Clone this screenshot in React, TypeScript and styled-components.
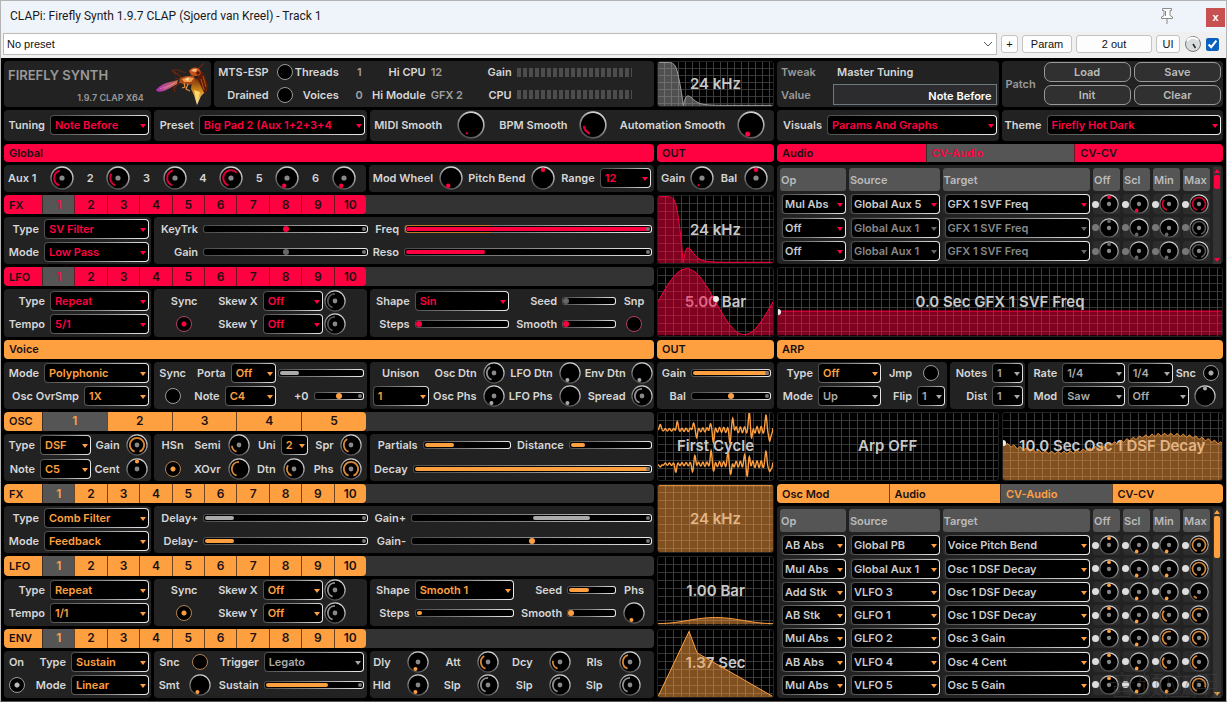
import React, { useId } from "react";
import styled, { createGlobalStyle, css, ThemeProvider, useTheme } from "styled-components";

declare module "styled-components" {
  export interface DefaultTheme {
    accent: string;
  }
}

const HOT = "#ff0040";
const WARM = "#ffa040";
const MUTE = "#aaaaaa";
const DIM = "#666666";
const hot = { accent: HOT };
const warm = { accent: WARM };

const Global = createGlobalStyle`
  * { box-sizing: border-box; }
  body { margin: 0; background: #000; }
  button, input, select { font: inherit; margin: 0; }
`;

/* ---------- host window ---------- */

const Window = styled.main`
  min-height: 100vh;
  display: flex;
  flex-direction: column;
  border: 1px solid #b4b4b4;
  border-bottom-color: #555;
  background: #f0f0f0;
  font-family: "Liberation Sans", Arial, sans-serif;
  font-size: 11px;
  color: #111;
`;

const TitleBar = styled.header`
  flex: none;
  height: 31px;
  display: flex;
  align-items: center;
  padding: 0 1px 2px 9px;
  background: #eff3fa;
`;

const Title = styled.h1`
  flex: 1;
  margin: 0;
  font: 400 12px Roboto, "Open Sans", sans-serif;
  color: #1a1a1a;
`;

const PinButton = styled.button`
  width: 20px;
  height: 20px;
  padding: 0;
  border: 0;
  background: none;
  margin-right: 29px;
`;

const CloseButton = styled.button`
  width: 19px;
  height: 19px;
  padding: 0 0 2px;
  border: 0;
  align-self: flex-end;
  margin-bottom: 3px;
  background: #c75050;
  color: #fff;
  font-weight: 700;
  line-height: 14px;
`;

const HostBar = styled.div`
  flex: none;
  height: 26px;
  display: flex;
  align-items: center;
  gap: 4px;
  padding: 0 7px 2px 2px;
`;

const PresetBox = styled.span`
  flex: 1;
  position: relative;
  display: flex;
  height: 22px;
  svg { position: absolute; right: 4px; top: 6px; pointer-events: none; }
`;

const PresetSelect = styled.select`
  flex: 1;
  appearance: none;
  border: 1px solid #bcbcbc;
  background: #fff;
  padding: 0 20px 0 3px;
  color: #111;
`;

const HostButton = styled.button<{ $w: number }>`
  width: ${(p) => p.$w}px;
  height: 18px;
  padding: 0;
  border: 1px solid #c4c4c4;
  border-radius: 3px;
  background: #fdfdfd;
  color: #111;
  line-height: 14px;
`;

const HostCheck = styled.input`
  width: 13px;
  height: 13px;
  accent-color: #0a62bd;
`;

/* ---------- plugin surface ---------- */

const Surface = styled.section`
  flex: 1;
  position: relative;
  background: #000;
  padding: 3px;
  display: grid;
  gap: 3px;
  grid-template-columns: minmax(0, 650fr) minmax(0, 117fr) minmax(0, 446fr);
  grid-template-rows: 46px 31px 18px 27px repeat(7, minmax(19px, 19fr) minmax(46px, 47fr));
  font-family: Inter, Roboto, sans-serif;
  font-size: 11px;
  font-weight: 600;
  line-height: 14px;
  color: #d6d6d6;
`;

const Slot = styled.div<{ $row: string; $col: string }>`
  grid-row: ${(p) => p.$row};
  grid-column: ${(p) => p.$col};
  display: flex;
  gap: 3px;
  min-width: 0;
  min-height: 0;
`;

const Panel = styled.div<{ $w?: number }>`
  flex: ${(p) => p.$w ?? 1} 1 0;
  min-width: 0;
  display: flex;
  flex-direction: column;
  padding: 0 2px 1px 0;
  border-radius: 4px;
  background: #222;
`;

const Line = styled.div<{ $cols: string }>`
  flex: 1;
  min-height: 0;
  display: grid;
  grid-template-columns: ${(p) => p.$cols};
  align-items: center;
`;

const Label = styled.label<{ $align?: "left" | "center"; $soft?: boolean }>`
  white-space: nowrap;
  min-width: 0;
  display: flex;
  color: ${(p) => (p.$soft ? "#999" : "#d6d6d6")};
  justify-content: ${(p) => (p.$align === "left" ? "flex-start" : p.$align === "center" ? "center" : "flex-end")};
  padding-right: ${(p) => (p.$align === "center" ? 0 : 5)}px;
  padding-left: ${(p) => (p.$align === "left" ? 4 : 0)}px;
`;

const Value = styled.span<{ $center?: boolean }>`
  color: #a0a0a0;
  white-space: nowrap;
  text-align: ${(p) => (p.$center ? "center" : "left")};
`;

const HeaderBar = styled.h2`
  flex: 1;
  margin: 0;
  min-width: 0;
  display: flex;
  align-items: center;
  padding-left: 5px;
  border-radius: 4px;
  background: ${(p) => p.theme.accent};
  color: #1a1012;
  font: inherit;
`;

const TabStrip = styled.div`
  flex: 1;
  min-width: 0;
  display: grid;
  grid-template-columns: 362fr 288fr;
  border-radius: 4px;
  overflow: hidden;
  background: #333;
`;

const TabGroup = styled.div<{ $cols: string }>`
  flex: 1;
  min-width: 0;
  display: grid;
  grid-template-columns: ${(p) => p.$cols};
  border-radius: 4px;
  overflow: hidden;
`;

const TabName = styled.span`
  display: flex;
  align-items: center;
  padding-left: 5px;
  background: ${(p) => p.theme.accent};
  color: #1a1012;
`;

const Tab = styled.button<{ $active?: boolean; $left?: boolean }>`
  min-width: 0;
  padding: 0 0 0 ${(p) => (p.$left ? 5 : 0)}px;
  border: 0;
  border-left: 1px solid rgba(50, 30, 20, 0.7);
  &:first-child { border-left: 0; }
  background: ${(p) => (p.$active ? "#555" : p.theme.accent)};
  color: ${(p) => (p.$active ? p.theme.accent : "#1a1012")};
  text-align: ${(p) => (p.$left ? "left" : "center")};
  font-size: ${(p) => (p.$left ? 11 : 12)}px;
`;

/* ---------- controls ---------- */

const rim = "linear-gradient(105deg, #4a4a4a, #888 50%, #f0f0f0) border-box";

const SelectShell = styled.span<{ $c: string }>`
  position: relative;
  display: flex;
  min-width: 0;
  height: 20px;
  border: 1px solid transparent;
  border-radius: 4px;
  background: linear-gradient(#000, #000) padding-box, ${rim};
  color: ${(p) => p.$c};
  &::after {
    content: "";
    position: absolute;
    right: 2px;
    top: 8px;
    border: 3px solid transparent;
    border-top: 4px solid currentColor;
    border-bottom: 0;
    pointer-events: none;
  }
`;

const NativeSelect = styled.select<{ $tight?: boolean }>`
  flex: 1;
  min-width: 0;
  appearance: none;
  border: 0;
  background: none;
  color: inherit;
  padding: 0 ${(p) => (p.$tight ? 8 : 10)}px 0 ${(p) => (p.$tight ? 2 : 4)}px;
  option { color: #ddd; background: #000; }
`;

type Tone = "accent" | "mute" | "dim";
const useTone = (tone?: Tone) => {
  const t = useTheme();
  return tone === "mute" ? MUTE : tone === "dim" ? DIM : t.accent;
};

function Select({ v, tone, color, arrow, tight, id, name }: any) {
  const c = useTone(tone);
  return (
    <SelectShell $c={arrow ?? c}>
      <NativeSelect id={id} aria-label={name} $tight={tight} style={color ? { color } : undefined}>
        <option>{v}</option>
      </NativeSelect>
    </SelectShell>
  );
}

const Overlay = styled.input`
  position: absolute;
  inset: 0;
  width: 100%;
  height: 100%;
  opacity: 0;
`;

const KnobShell = styled.span<{ $size: number }>`
  position: relative;
  flex: none;
  width: ${(p) => p.$size}px;
  height: ${(p) => p.$size}px;
  justify-self: center;
  display: block;
  svg { display: block; width: 100%; height: 100%; }
`;

function Knob({ v = 0, size = 22, hub = true, dot, tone, id, name }: any) {
  const c = useTone(tone);
  const gid = useId();
  const at = (t: number, r: number) => {
    const a = ((200 + t * 320) * Math.PI) / 180;
    return [12 + Math.sin(a) * r, 12 - Math.cos(a) * r];
  };
  const [x0, y0] = at(0, 7.8);
  const [x1, y1] = at(v, 7.8);
  const showDot = dot || v === 0;
  const [dx, dy] = at(v, 8.2);
  return (
    <KnobShell $size={size}>
      <svg viewBox="0 0 24 24" aria-hidden="true">
        <defs>
          <linearGradient id={gid} x1="0.2" y1="1" x2="0.7" y2="0">
            <stop offset="0" stopColor="#444" />
            <stop offset="1" stopColor="#d8d8d8" />
          </linearGradient>
        </defs>
        <circle cx="12" cy="12" r="11" fill="#000" stroke={`url(#${gid})`} strokeWidth="1.4" />
        {showDot ? (
          <circle cx={dx} cy={dy} r="2.2" fill={c} />
        ) : (
          <path
            d={`M${x0} ${y0}A7.8 7.8 0 ${v * 320 > 180 ? 1 : 0} 1 ${x1} ${y1}`}
            fill="none"
            stroke={c}
            strokeWidth="2"
            opacity="0.85"
          />
        )}
        {hub && <circle cx="12" cy="12" r="2.6" fill="#888" />}
      </svg>
      <Overlay type="range" id={id} aria-label={name} defaultValue={Math.round(v * 100)} />
    </KnobShell>
  );
}

const SliderShell = styled.span`
  position: relative;
  display: block;
  min-width: 0;
  height: 8px;
  border: 1px solid transparent;
  border-radius: 3px;
  background: linear-gradient(#000, #000) padding-box, ${rim};
`;

const Fill = styled.span`
  position: absolute;
  top: 1px;
  height: 4px;
  border-radius: 2px;
`;

const Thumb = styled.span`
  position: absolute;
  top: 0;
  width: 6px;
  height: 6px;
  border-radius: 3px;
`;

const EndDot = styled.span`
  position: absolute;
  right: 1px;
  top: 1px;
  width: 4px;
  height: 4px;
  border-radius: 2px;
  background: #777;
`;

const ModRange = styled.span`
  position: absolute;
  left: 0;
  top: -1px;
  bottom: -1px;
  border: 1px solid #c07828;
  border-right: 0;
  border-radius: 3px 0 0 3px;
`;

function Slider({ v = 0, from = 0, dot, end, tone, id, mod }: any) {
  const c = useTone(tone);
  return (
    <SliderShell>
      {mod && <ModRange style={{ width: `${mod * 100}%` }} />}
      {dot || v === 0 ? (
        <Thumb style={{ background: c, left: `calc(${v} * (100% - 6px))` }} />
      ) : (
        <Fill style={{ background: c, left: `calc(${from * 100}% + 1px)`, width: `calc(${(v - from) * 100}% - 2px)` }} />
      )}
      {end && <EndDot />}
      <Overlay type="range" id={id} defaultValue={Math.round(v * 100)} />
    </SliderShell>
  );
}

const Check = styled.input<{ $ring?: string; $dot?: string }>`
  appearance: none;
  justify-self: center;
  width: 16px;
  height: 16px;
  border: 1px solid ${(p) => p.$ring ?? "#999"};
  border-radius: 8px;
  background: #000;
  ${(p) =>
    p.$dot &&
    css`
      &:checked { background: radial-gradient(circle at 50% 50%, ${p.$dot} 2px, #000 3px); }
    `}
`;

function Field({ label, align, soft, children }: any) {
  const id = useId();
  return (
    <>
      <Label htmlFor={id} $align={align} $soft={soft}>{label}</Label>
      {React.cloneElement(children, { id })}
    </>
  );
}

/* ---------- graphs ---------- */

const GraphBox = styled.div<{ $w?: number; $cell?: number }>`
  flex: ${(p) => p.$w ?? 1} 1 0;
  min-width: 0;
  position: relative;
  overflow: hidden;
  display: flex;
  align-items: center;
  justify-content: center;
  border: 1px solid #222;
  border-radius: 3px;
  background:
    repeating-linear-gradient(90deg, transparent 0 ${(p) => (p.$cell ?? 8) - 1}px, #3e3e3e ${(p) => (p.$cell ?? 8) - 1}px ${(p) => p.$cell ?? 8}px),
    repeating-linear-gradient(180deg, transparent 0 ${(p) => (p.$cell ?? 8) - 1}px, #363636 ${(p) => (p.$cell ?? 8) - 1}px ${(p) => p.$cell ?? 8}px),
    #000;
  svg { position: absolute; inset: 0; width: 100%; height: 100%; }
`;

const GraphText = styled.span`
  font-size: 15px;
  line-height: 18px;
  color: #c8c8c8;
  white-space: nowrap;
`;

const Marker = styled.span`
  position: absolute;
  width: 6px;
  height: 6px;
  border-radius: 3px;
  background: #eee;
`;

function Graph({ text, line, w, color, cell, bare, mark }: any) {
  const c = color ?? useTheme().accent;
  return (
    <GraphBox $w={w} $cell={cell}>
      <GraphText>{text}</GraphText>
      {line && (
        <svg viewBox="0 0 100 100" preserveAspectRatio="none" aria-hidden="true">
          {!bare && <path d={`${line}L100 100L0 100Z`} fill={c} opacity="0.5" />}
          <path d={line} fill="none" stroke={c} strokeWidth={bare ? 1.4 : 1} vectorEffect="non-scaling-stroke" />
        </svg>
      )}
      {mark && <Marker style={{ left: `calc(${mark[0]}% - 3px)`, top: `calc(${mark[1]}% - 3px)` }} />}
    </GraphBox>
  );
}

const plot = (n: number, f: (t: number) => number) => {
  let d = "";
  for (let i = 0; i <= n; i++) d += `${i ? "L" : "M"}${((i / n) * 100).toFixed(2)} ${f(i / n).toFixed(2)}`;
  return d;
};
const filterLine =
  "M0 1L9 1C15 1 16 12 18 36C20 60 21 80 22 99C23 88 24 77 26 77C30 78 31 92 39 96C44 98 50 98.5 60 98.5L100 98.5";
const sineLine = plot(60, (t) => 50 - 49 * Math.sin(t * Math.PI * 2));
const smoothLine = plot(40, (t) => 99 - 4.5 * (1 - Math.cos(t * Math.PI * 2)));
const envLine = "M0 99L27 2L34 34L100 99";
const decayLine = plot(
  420,
  (t) => 45.5 + 13.5 * Math.sin(t * Math.PI * 2) + 1.8 * Math.sin(t * Math.PI * 2 * 35)
);
const wave = (base: number, spikes: number[][]) =>
  plot(340, (t) => {
    const x = t * 342;
    let y = base + (1.4 + t * 4) * Math.sin((x * Math.PI * 2) / 12.4);
    for (const [sx, h] of spikes) y += h * Math.exp(-(((x - sx) / 3.6) ** 2));
    return y;
  });
const cycleLine =
  wave(25, [[6, -8], [57, -11], [105, -10], [115, 9], [155, -8], [165, 16], [214, 16], [223, -16], [272, -24], [279, 12], [322, -20], [332, 22]]) +
  wave(76, [[8, 5], [53, 10], [103, 9], [110, -11], [158, -17], [166, 8], [208, -13], [217, 14], [258, -10], [266, 16], [272, -10], [322, -17], [332, 16]]);

/* ---------- brand and meters ---------- */

const Brand = styled.div`
  flex: 1;
  display: flex;
  justify-content: space-between;
  align-items: center;
  padding-left: 4px;
  color: #999;
`;

const BrandText = styled.div`
  flex: 1;
  display: flex;
  flex-direction: column;
  gap: 9px;
  padding-top: 3px;
`;

const BrandName = styled.strong`
  font-size: 13px;
  font-weight: 600;
  line-height: 16px;
`;

const Version = styled.span`
  font-size: 9px;
  line-height: 12px;
  text-align: right;
  padding-right: 11px;
`;

const Meter = styled.span`
  width: 115px;
  height: 9px;
  background: repeating-linear-gradient(90deg, #4c4c4c 0 4px, transparent 4px 6px);
`;

function Firefly() {
  return (
    <svg width="54" height="44" viewBox="0 0 54 44" aria-hidden="true">
      <defs>
        <linearGradient id="wingL" x1="0" x2="1"><stop stopColor="#b42cc0" /><stop offset="0.5" stopColor="#b85080" /><stop offset="1" stopColor="#c86838" /></linearGradient>
        <linearGradient id="wingR" x1="0" x2="0" y1="0" y2="1"><stop stopColor="#5a1c08" /><stop offset="0.5" stopColor="#d08818" /><stop offset="1" stopColor="#fff0b0" /></linearGradient>
      </defs>
      <path d="M43 7L49 1M26 15L17 8L21 13M31 11L23 8L18 8M27 18L20 16M24 21L19 26L20 30" fill="none" stroke="#6a2410" strokeWidth="1.2" />
      <path d="M1 28Q4 24 11 21L23 18L22 22Q16 26 9 29Q2 31 1 28Z" fill="url(#wingL)" />
      <path d="M5 27L20 21M9 27L22 20" stroke="#e89ab0" strokeWidth="0.500" />
      <path d="M37 18L48 14Q53 22 52 28L46 34L42 43L39 33L36 27Z" fill="url(#wingR)" />
      <path d="M46 8Q51 14 53 24L50 33L46 24L42 16Z" fill="#5c1a08" />
      <path d="M48 14L51 25M46 17L49 28" stroke="#c86418" strokeWidth="0.800" />
      <path d="M25 16Q31 13 39 14L41 20L34 23L24 21Z" fill="#a84818" />
      <path d="M27 17L33 15L39 16L36 20L29 20Z" fill="#f0a050" />
      <path d="M30 17L34 16L33 19Z" fill="#ffe8b0" />
      <path d="M34 9Q37 4 43 6Q47 9 45 13Q40 15 36 13Z" fill="#c85018" />
      <path d="M36 9Q38 6 42 7L41 10Z" fill="#f8c080" />
      <circle cx="43" cy="11" r="1.800" fill="#5a1808" />
      <path d="M33 22L31 27L35 29M29 21L30 25L27 26" fill="none" stroke="#e89040" strokeWidth="1.200" />
      <path d="M39 28L42 41L45 30Z" fill="#ffd868" />
    </svg>
  );
}

const TextInput = styled.input`
  height: 21px;
  min-width: 0;
  width: 100%;
  padding: 2px 4px 0;
  border: 1px solid #6c7a80;
  background: #2c2c2e;
  color: #fff;
  text-align: right;
`;

const PatchGrid = styled.div`
  flex: 1;
  display: grid;
  grid-template-columns: 39px 1fr 1fr;
  grid-template-rows: 1fr 1fr;
  gap: 2px 3px;
  align-items: center;
`;

const PatchName = styled.span`
  grid-row: 1 / 3;
  padding-left: 4px;
  color: #999;
`;

const PatchButton = styled.button`
  height: 20px;
  padding: 0;
  border: 1px solid #999;
  border-radius: 7px;
  background: #303030;
  color: #bbb;
`;

/* ---------- modulation matrix ---------- */

const Matrix = styled.div`
  flex: 1;
  min-width: 0;
  min-height: 0;
  contain: size;
  display: flex;
  overflow: hidden;
  border-radius: 4px;
  background: #222;
  padding-right: 2px;
`;

const Table = styled.table<{ $fill?: boolean }>`
  flex: 1;
  min-width: 0;
  table-layout: fixed;
  border-collapse: separate;
  border-spacing: 3px;
  ${(p) => p.$fill && "height: 100%;"}
  th {
    height: 23px;
    padding: 0 0 0 1px;
    border-radius: 3px;
    background: #555;
    color: #bbb;
    font-weight: 600;
    text-align: left;
  }
  td { height: 20px; padding: 0; border-radius: 3px; background: #2c2c2c; }
`;

const SelectCell = styled.div`
  padding-left: 2px;
  display: grid;
`;

const KnobCell = styled.div`
  display: flex;
  align-items: center;
  margin-left: -1px;
`;

const Led = styled.input`
  appearance: none;
  flex: none;
  width: 7px;
  height: 7px;
  border-radius: 4px;
  background: #777;
  &:checked { background: #ddd; }
`;

const Scroll = styled.div`
  width: 8px;
  margin-top: 2px;
  display: flex;
  flex-direction: column;
  align-items: center;
  justify-content: space-between;
  background: #333;
`;

const Arrow = styled.span<{ $down?: boolean }>`
  border: 3px solid transparent;
  border-${(p) => (p.$down ? "top" : "bottom")}: 4px solid ${(p) => p.theme.accent};
  border-${(p) => (p.$down ? "bottom" : "top")}: 0;
  margin: 2px 0;
`;

const ScrollThumb = styled.span<{ $h: number }>`
  width: 6px;
  height: ${(p) => p.$h}px;
  margin-bottom: auto;
  border-radius: 2px;
  background: ${(p) => p.theme.accent};
`;

const OpCol = styled.col`
  width: 16%;
`;
const SourceCol = styled.col`
  width: 22%;
`;
const KnobCol = styled.col`
  width: 27px;
`;

type MatrixRow = [string, string, string, number, number, number, boolean?];

function ModMatrix({ rows, thumb, fill }: { rows: MatrixRow[]; thumb: number; fill?: boolean }) {
  const { accent } = useTheme();
  return (
    <Matrix>
      <Table $fill={fill}>
        <colgroup>
          <OpCol /><SourceCol /><col /><KnobCol /><KnobCol /><KnobCol /><KnobCol />
        </colgroup>
        <thead>
          <tr>{["Op", "Source", "Target", "Off", "Scl", "Min", "Max"].map((h) => <th key={h}>{h}</th>)}</tr>
        </thead>
        <tbody>
          {rows.map(([op, src, dst, scl, min, max, off], i) => {
            const c = off ? "#888" : "#ccc";
            const k = off ? "dim" : "accent";
            const ar = off ? DIM : accent;
            return (
              <tr key={i}>
                <td><SelectCell><Select v={op} color="#ccc" arrow={accent} tight name="Op" /></SelectCell></td>
                <td><SelectCell><Select v={src} color={c} arrow={ar} tight name="Source" /></SelectCell></td>
                <td><SelectCell><Select v={dst} color={c} arrow={ar} tight name="Target" /></SelectCell></td>
                {[0.5, scl, min, max].map((val, j) => (
                  <td key={j}>
                    <KnobCell>
                      <Led type="checkbox" defaultChecked={!off} aria-label="Enable" />
                      <Knob v={val} size={20} dot={j === 0} tone={k} name={["Offset", "Scale", "Min", "Max"][j]} />
                    </KnobCell>
                  </td>
                ))}
              </tr>
            );
          })}
        </tbody>
      </Table>
      <Scroll>
        <Arrow />
        <ScrollThumb $h={thumb} />
        <Arrow $down />
      </Scroll>
    </Matrix>
  );
}

const Watermark = styled.span`
  position: absolute;
  right: 6px;
  bottom: 0;
  font: 100 28px "Noto Sans CJK SC", sans-serif;
  line-height: 34px;
  color: rgba(70, 70, 70, 0.6);
  pointer-events: none;
`;

function Tabs({ name, count }: { name: string; count: number }) {
  return (
    <TabStrip>
      <TabGroup $cols={`38fr repeat(${count}, ${324 / count}fr)`}>
        <TabName>{name}</TabName>
        {Array.from({ length: count }, (_, i) => (
          <Tab key={i} $active={i === 0}>{i + 1}</Tab>
        ))}
      </TabGroup>
    </TabStrip>
  );
}

function MatrixTabs({ names }: { names: string[] }) {
  return (
    <TabGroup $cols={`repeat(${names.length}, 1fr)`}>
      {names.map((n) => <Tab key={n} $left $active={n === "CV-Audio"}>{n}</Tab>)}
    </TabGroup>
  );
}

const LEFT = "1";
const MID = "2";
const RIGHT = "3";

function LfoPanels({ tempo, shape, snap, snapControl, cols, seed, seedTone, steps, knobTone, ring, dot }: any) {
  return (
    <>
      <Panel $w={146}>
        <Line $cols="46px 1fr"><Field label="Type"><Select v="Repeat" /></Field></Line>
        <Line $cols="46px 1fr"><Field label="Tempo"><Select v={tempo} /></Field></Line>
      </Panel>
      <Panel $w={213}>
        <Line $cols="61px 48px 1fr 24px 18px">
          <Label as="span" $align="center">Sync</Label>
          <Field label="Skew X"><Select v="Off" /></Field>
          <Knob v={0.5} tone={knobTone} name="Skew X amount" />
        </Line>
        <Line $cols="61px 48px 1fr 24px 18px">
          <Check type="checkbox" defaultChecked aria-label="Sync" $ring={ring} $dot={dot} />
          <Field label="Skew Y"><Select v="Off" /></Field>
          <Knob v={0.5} tone={knobTone} name="Skew Y amount" />
        </Line>
      </Panel>
      <Panel $w={285}>
        <Line $cols={cols}>
          <Field label="Shape"><Select v={shape} /></Field>
          <Field label="Seed"><Slider v={seed} tone={seedTone} /></Field>
          <Label as="span" $align="center">{snap}</Label>
        </Line>
        <Line $cols={cols}>
          <Field label="Steps"><Slider v={steps} /></Field>
          <Field label="Smooth"><Slider v={0} /></Field>
          {snapControl}
        </Line>
      </Panel>
    </>
  );
}

export default function App() {
  return (
    <ThemeProvider theme={hot}>
      <Global />
      <Window>
        <TitleBar>
          <Title>CLAPi: Firefly Synth 1.9.7 CLAP (Sjoerd van Kreel) - Track 1</Title>
          <PinButton aria-label="Pin">
            <svg width="20" height="20" viewBox="0 0 20 20" fill="#fff" stroke="#8a8a8a">
              <path d="M5.500 2.500h9v2h-1.500v5l2.500 1.500v1.500h-11v-1.500l2.500-1.500v-5h-1.500z" />
              <path d="M10 12.500v5.500M8.500 5v5" />
            </svg>
          </PinButton>
          <CloseButton aria-label="Close">x</CloseButton>
        </TitleBar>
        <HostBar>
          <PresetBox>
            <PresetSelect aria-label="Host preset"><option>No preset</option></PresetSelect>
            <svg width="10" height="10" viewBox="0 0 10 10" fill="none" stroke="#555"><path d="M1 3l4 4 4-4" /></svg>
          </PresetBox>
          <HostButton $w={17}>+</HostButton>
          <HostButton $w={50}>Param</HostButton>
          <HostButton $w={76}>2 out</HostButton>
          <HostButton $w={24}>UI</HostButton>
          <svg width="18" height="18" viewBox="0 0 18 18" aria-hidden="true">
            <circle cx="9" cy="9" r="7.500" fill="#d8dcdc" stroke="#777" />
            <path d="M3 6a7 7 0 0 1 11-1" stroke="#fff" strokeWidth="2" fill="none" />
            <path d="M9 9l2.500 4" stroke="#222" strokeWidth="1.500" />
          </svg>
          <HostCheck type="checkbox" defaultChecked aria-label="Enabled" />
        </HostBar>

        <Surface>
          <Slot $row="1" $col={LEFT}>
            <Panel $w={206}>
              <Brand>
                <BrandText>
                  <BrandName>FIREFLY SYNTH</BrandName>
                  <Version>1.9.7 CLAP X64</Version>
                </BrandText>
                <Firefly />
              </Brand>
            </Panel>
            <Panel $w={441}>
              <Line $cols="60px 23px 47px 31px 56px 46px 40px 1fr">
                <Field label="MTS-ESP"><Check type="checkbox" /></Field>
                <Label as="span">Threads</Label><Value $center>1</Value>
                <Label as="span">Hi CPU</Label><Value>12</Value>
                <Label as="span">Gain</Label><Meter />
              </Line>
              <Line $cols="60px 23px 47px 31px 56px 46px 40px 1fr">
                <Field label="Drained"><Check type="checkbox" /></Field>
                <Label as="span">Voices</Label><Value $center>0</Value>
                <Label as="span">Hi Module</Label><Value>GFX 2</Value>
                <Label as="span">CPU</Label><Meter />
              </Line>
            </Panel>
          </Slot>
          <Slot $row="1" $col={MID}><Graph text="24 kHz" line={filterLine} color="#a0a0a0" cell={7} /></Slot>
          <Slot $row="1" $col={RIGHT}>
            <Panel>
              <Line $cols="56px 1fr">
                <Label as="span" $soft $align="left">Tweak</Label>
                <Label as="span" $align="left">Master Tuning</Label>
              </Line>
              <Line $cols="56px 1fr">
                <Field label="Value" soft align="left"><TextInput defaultValue="Note Before" /></Field>
              </Line>
            </Panel>
            <Panel>
              <PatchGrid>
                <PatchName>Patch</PatchName>
                <PatchButton>Load</PatchButton><PatchButton>Save</PatchButton>
                <PatchButton>Init</PatchButton><PatchButton>Clear</PatchButton>
              </PatchGrid>
            </Panel>
          </Slot>

          <Slot $row="2" $col="1 / 3">
            <Panel $w={146}>
              <Line $cols="46px 1fr"><Field label="Tuning"><Select v="Note Before" /></Field></Line>
            </Panel>
            <Panel $w={213}>
              <Line $cols="45px 1fr"><Field label="Preset"><Select v="Big Pad 2 (Aux 1+2+3+4" /></Field></Line>
            </Panel>
            <Panel $w={405}>
              <Line $cols="81fr 42fr 81fr 42fr 117fr 42fr">
                <Field label="MIDI Smooth" align="left"><Knob size={28} v={0.04} hub={false} /></Field>
                <Field label="BPM Smooth"><Knob size={28} v={0.2} hub={false} /></Field>
                <Field label="Automation Smooth"><Knob size={28} hub={false} /></Field>
              </Line>
            </Panel>
          </Slot>
          <Slot $row="2" $col={RIGHT}>
            <Panel><Line $cols="50px 1fr"><Field label="Visuals"><Select v="Params And Graphs" /></Field></Line></Panel>
            <Panel><Line $cols="45px 1fr"><Field label="Theme"><Select v="Firefly Hot Dark" /></Field></Line></Panel>
          </Slot>

          <Slot $row="3" $col={LEFT}><HeaderBar>Global</HeaderBar></Slot>
          <Slot $row="3" $col={MID}><HeaderBar>OUT</HeaderBar></Slot>
          <Slot $row="3" $col={RIGHT}><MatrixTabs names={["Audio", "CV-Audio", "CV-CV"]} /></Slot>

          <Slot $row="4" $col={LEFT}>
            <Panel $w={362}>
              <Line $cols="44px repeat(11, 1fr) 6px">
                <Field label="Aux 1" align="left"><Knob size={24} v={0.45} /></Field>
                <Field label="2" align="center"><Knob size={24} v={0.32} /></Field>
                <Field label="3" align="center"><Knob size={24} v={0.45} /></Field>
                <Field label="4" align="center"><Knob size={24} v={0.65} /></Field>
                <Field label="5" align="center"><Knob size={24} /></Field>
                <Field label="6" align="center"><Knob size={24} /></Field>
              </Line>
            </Panel>
            <Panel $w={285}>
              <Line $cols="66px 32px 60px 32px 41px 1fr 1px">
                <Field label="Mod Wheel" align="left"><Knob size={24} hub={false} /></Field>
                <Field label="Pitch Bend" align="center"><Knob size={24} v={0.5} dot hub={false} /></Field>
                <Field label="Range"><Select v="12" /></Field>
              </Line>
            </Panel>
          </Slot>
          <Slot $row="4" $col={MID}>
            <Panel>
              <Line $cols="29px 1fr 21px 1fr">
                <Field label="Gain" align="left"><Knob size={24} v={0.04} /></Field>
                <Field label="Bal" align="center"><Knob size={24} v={0.5} dot /></Field>
              </Line>
            </Panel>
          </Slot>
          <Slot $row="4 / 7" $col={RIGHT}>
            <ModMatrix
              thumb={14}
              rows={[
                ["Mul Abs", "Global Aux 5", "GFX 1 SVF Freq", 0, 0.35, 1],
                ["Off", "Global Aux 1", "GFX 1 SVF Freq", 0, 0, 1, true],
                ["Off", "Global Aux 1", "GFX 1 SVF Freq", 0, 0, 1, true],
              ]}
            />
          </Slot>

          <Slot $row="5" $col={LEFT}><Tabs name="FX" count={10} /></Slot>
          <Slot $row="6" $col={LEFT}>
            <Panel $w={146}>
              <Line $cols="40px 1fr"><Field label="Type"><Select v="SV Filter" /></Field></Line>
              <Line $cols="40px 1fr"><Field label="Mode"><Select v="Low Pass" /></Field></Line>
            </Panel>
            <Panel $w={501}>
              <Line $cols="49px 165fr 36px 248fr">
                <Field label="KeyTrk"><Slider v={0.5} dot end /></Field>
                <Field label="Freq"><Slider v={1} end mod={0.35} /></Field>
              </Line>
              <Line $cols="49px 165fr 36px 248fr">
                <Field label="Gain"><Slider v={0.5} dot end tone="dim" /></Field>
                <Field label="Reso"><Slider v={0.33} end /></Field>
              </Line>
            </Panel>
          </Slot>
          <Slot $row="5 / 7" $col={MID}><Graph text="24 kHz" line={filterLine} /></Slot>

          <Slot $row="7" $col={LEFT}><Tabs name="LFO" count={10} /></Slot>
          <Slot $row="8" $col={LEFT}>
            <LfoPanels
              tempo="5/1" shape="Sin" snap="Snp" seed={0} seedTone="dim" steps={0} knobTone="dim"
              ring="#b04060" dot={HOT}
              cols="45px 95fr 53px 54fr 36px"
              snapControl={<Check type="checkbox" aria-label="Snap" $ring="#b04060" />}
            />
          </Slot>
          <Slot $row="7 / 9" $col={MID}><Graph text="5.00 Bar" line={sineLine} mark={[50, 46]} /></Slot>
          <Slot $row="7 / 9" $col={RIGHT}>
            <Graph text="0.0 Sec GFX 1 SVF Freq" line="M0 64L100 64" mark={[0, 65]} />
          </Slot>

          <ThemeProvider theme={warm}>
            <Slot $row="9" $col={LEFT}><HeaderBar>Voice</HeaderBar></Slot>
            <Slot $row="9" $col={MID}><HeaderBar>OUT</HeaderBar></Slot>
            <Slot $row="9" $col={RIGHT}><HeaderBar>ARP</HeaderBar></Slot>

            <Slot $row="10" $col={LEFT}>
              <Panel $w={146}>
                <Line $cols="40px 1fr"><Field label="Mode"><Select v="Polyphonic" /></Field></Line>
                <Line $cols="80px 1fr"><Field label="Osc OvrSmp"><Select v="1X" /></Field></Line>
              </Panel>
              <Panel $w={213}>
                <Line $cols="38px 39px 45px 2px 1fr 1px">
                  <Label as="span" $align="center">Sync</Label>
                  <Field label="Porta"><Select v="Off" /></Field>
                  <span />
                  <Slider v={0.25} tone="mute" />
                </Line>
                <Line $cols="38px 33px 51px 38px 1fr 1px">
                  <Check type="checkbox" aria-label="Sync" />
                  <Field label="Note"><Select v="C4" /></Field>
                  <Field label="+0"><Slider v={0.52} dot end /></Field>
                </Line>
              </Panel>
              <Panel $w={285}>
                <Line $cols="3px 56px 53px 24px 52px 24px 49px 1fr">
                  <span />
                  <Label as="span" $align="center">Unison</Label>
                  <Field label="Osc Dtn"><Knob v={0.4} tone="mute" /></Field>
                  <Field label="LFO Dtn"><Knob hub={false} tone="mute" /></Field>
                  <Field label="Env Dtn"><Knob hub={false} tone="mute" /></Field>
                </Line>
                <Line $cols="3px 56px 53px 24px 52px 24px 49px 1fr">
                  <span />
                  <Select v="1" name="Unison" />
                  <Field label="Osc Phs"><Knob tone="mute" /></Field>
                  <Field label="LFO Phs"><Knob hub={false} tone="mute" /></Field>
                  <Field label="Spread"><Knob v={0.5} tone="mute" /></Field>
                </Line>
              </Panel>
            </Slot>
            <Slot $row="10" $col={MID}>
              <Panel>
                <Line $cols="34px 1fr 1px"><Field label="Gain"><Slider v={1} end /></Field></Line>
                <Line $cols="34px 1fr 1px"><Field label="Bal"><Slider v={0.5} dot end /></Field></Line>
              </Panel>
            </Slot>
            <Slot $row="10" $col={RIGHT}>
              <Panel $w={170}>
                <Line $cols="41px 1fr 36px 28px">
                  <Field label="Type"><Select v="Off" /></Field>
                  <Field label="Jmp"><Check type="checkbox" /></Field>
                </Line>
                <Line $cols="41px 1fr 36px 28px">
                  <Field label="Mode"><Select v="Up" tone="mute" /></Field>
                  <Field label="Flip"><Select v="1" tone="mute" /></Field>
                </Line>
              </Panel>
              <Panel $w={74}>
                <Line $cols="42px 1fr"><Field label="Notes"><Select v="1" tone="mute" /></Field></Line>
                <Line $cols="42px 1fr"><Field label="Dist"><Select v="1" tone="mute" /></Field></Line>
              </Panel>
              <Panel $w={195}>
                <Line $cols="34px 62fr 3px 45fr 28px 20px">
                  <Field label="Rate"><Select v="1/4" tone="mute" /></Field>
                  <span />
                  <Select v="1/4" tone="mute" name="Rate unit" />
                  <Field label="Snc"><Check type="checkbox" defaultChecked $dot="#aaa" /></Field>
                </Line>
                <Line $cols="34px 62fr 3px 61fr 32px">
                  <Field label="Mod"><Select v="Saw" tone="mute" /></Field>
                  <span />
                  <Select v="Off" tone="mute" name="Mod target" />
                  <Knob v={0.5} dot hub={false} tone="mute" name="Mod amount" />
                </Line>
              </Panel>
            </Slot>

            <Slot $row="11" $col={LEFT}><Tabs name="OSC" count={5} /></Slot>
            <Slot $row="12" $col={LEFT}>
              <Panel $w={146}>
                <Line $cols="36px 1fr 34px 24px">
                  <Field label="Type"><Select v="DSF" /></Field>
                  <Field label="Gain"><Knob v={1} /></Field>
                </Line>
                <Line $cols="36px 1fr 34px 24px">
                  <Field label="Note"><Select v="C5" /></Field>
                  <Field label="Cent"><Knob v={0.5} dot /></Field>
                </Line>
              </Panel>
              <Panel $w={213}>
                <Line $cols="38px 34px 26px 29px 27px 31px 24px">
                  <Label as="span" $align="center">HSn</Label>
                  <Field label="Semi"><Knob v={0.2} /></Field>
                  <Field label="Uni"><Select v="2" /></Field>
                  <Field label="Spr"><Knob v={0.4} /></Field>
                </Line>
                <Line $cols="38px 34px 26px 29px 27px 31px 24px">
                  <Check type="checkbox" defaultChecked aria-label="HSn" $ring="#b08050" $dot={WARM} />
                  <Field label="XOvr"><Knob v={0.5} hub={false} /></Field>
                  <Field label="Dtn"><Knob v={0.32} /></Field>
                  <Field label="Phs"><Knob v={1} /></Field>
                </Line>
              </Panel>
              <Panel $w={285}>
                <Line $cols="53px 88fr 58px 83fr">
                  <Field label="Partials"><Slider v={0.36} /></Field>
                  <Field label="Distance"><Slider v={0.2} /></Field>
                </Line>
                <Line $cols="43px 1fr"><Field label="Decay"><Slider v={1} end /></Field></Line>
              </Panel>
            </Slot>
            <Slot $row="11 / 13" $col={MID}><Graph text="First Cycle" line={cycleLine} bare /></Slot>
            <Slot $row="11 / 13" $col={RIGHT}>
              <Graph text="Arp OFF" />
              <Graph text="10.0 Sec Osc 1 DSF Decay" line={decayLine} mark={[0, 45]} />
            </Slot>

            <Slot $row="13" $col={LEFT}><Tabs name="FX" count={10} /></Slot>
            <Slot $row="14" $col={LEFT}>
              <Panel $w={146}>
                <Line $cols="40px 1fr"><Field label="Type"><Select v="Comb Filter" /></Field></Line>
                <Line $cols="40px 1fr"><Field label="Mode"><Select v="Feedback" /></Field></Line>
              </Panel>
              <Panel $w={501}>
                <Line $cols="49px 165fr 43px 241fr">
                  <Field label="Delay+"><Slider v={0.19} end tone="mute" /></Field>
                  <Field label="Gain+"><Slider v={0.75} from={0.5} end tone="mute" /></Field>
                </Line>
                <Line $cols="49px 165fr 43px 241fr">
                  <Field label="Delay-"><Slider v={0.19} end /></Field>
                  <Field label="Gain-"><Slider v={0.5} dot end /></Field>
                </Line>
              </Panel>
            </Slot>
            <Slot $row="13 / 15" $col={MID}><Graph text="24 kHz" line="M0 1L100 1" /></Slot>
            <Slot $row="13" $col={RIGHT}><MatrixTabs names={["Osc Mod", "Audio", "CV-Audio", "CV-CV"]} /></Slot>
            <Slot $row="14 / 19" $col={RIGHT}>
              <ModMatrix
                fill
                thumb={42}
                rows={[
                  ["AB Abs", "Global PB", "Voice Pitch Bend", 0, 0, 1],
                  ["Mul Abs", "Global Aux 1", "Osc 1 DSF Decay", 0, 0, 1],
                  ["Add Stk", "VLFO 3", "Osc 1 DSF Decay", 0, 0, 0.1],
                  ["AB Stk", "GLFO 1", "Osc 1 DSF Decay", 0, 0.35, 0.6],
                  ["Mul Abs", "GLFO 2", "Osc 3 Gain", 0, 0.55, 0.85],
                  ["AB Abs", "VLFO 4", "Osc 4 Cent", 0, 0.35, 0.45],
                  ["Mul Abs", "VLFO 5", "Osc 5 Gain", 0, 0, 0.85],
                ]}
              />
            </Slot>

            <Slot $row="15" $col={LEFT}><Tabs name="LFO" count={10} /></Slot>
            <Slot $row="16" $col={LEFT}>
              <LfoPanels
                tempo="1/1" shape="Smooth 1" snap="Phs" seed={0.46} steps={0.08} knobTone="mute"
                ring="#b08050" dot={WARM}
                cols="45px 100fr 53px 49fr 36px"
                snapControl={<Knob hub={false} name="Phase" />}
              />
            </Slot>
            <Slot $row="15 / 17" $col={MID}><Graph text="1.00 Bar" line={smoothLine} /></Slot>

            <Slot $row="17" $col={LEFT}><Tabs name="ENV" count={10} /></Slot>
            <Slot $row="18" $col={LEFT}>
              <Panel $w={146}>
                <Line $cols="25px 42px 1fr">
                  <Label as="span" $align="center">On</Label>
                  <Field label="Type"><Select v="Sustain" /></Field>
                </Line>
                <Line $cols="25px 42px 1fr">
                  <Check type="checkbox" defaultChecked aria-label="On" $dot="#bbb" />
                  <Field label="Mode"><Select v="Linear" /></Field>
                </Line>
              </Panel>
              <Panel $w={213}>
                <Line $cols="31px 30px 49px 1fr 1px">
                  <Field label="Snc"><Check type="checkbox" $ring="#b08050" /></Field>
                  <Field label="Trigger"><Select v="Legato" tone="mute" /></Field>
                </Line>
                <Line $cols="31px 30px 49px 1fr 1px">
                  <Field label="Smt"><Knob hub={false} /></Field>
                  <Field label="Sustain"><Slider v={0.66} end /></Field>
                </Line>
              </Panel>
              <Panel $w={285}>
                <Line $cols="26px 44px 26px 44px 28px 44px 26px 44px">
                  <Field label="Dly"><Knob /></Field>
                  <Field label="Att"><Knob v={0.4} /></Field>
                  <Field label="Dcy"><Knob v={0.25} /></Field>
                  <Field label="Rls"><Knob v={0.45} /></Field>
                </Line>
                <Line $cols="26px 44px 26px 44px 28px 44px 26px 44px">
                  <Field label="Hld"><Knob /></Field>
                  <Field label="Slp"><Knob v={0.5} tone="mute" /></Field>
                  <Field label="Slp"><Knob v={0.5} tone="mute" /></Field>
                  <Field label="Slp"><Knob v={0.5} tone="mute" /></Field>
                </Line>
              </Panel>
            </Slot>
            <Slot $row="17 / 19" $col={MID}><Graph text="1.37 Sec" line={envLine} /></Slot>
          </ThemeProvider>
          <Watermark>音频应用</Watermark>
        </Surface>
      </Window>
    </ThemeProvider>
  );
}
